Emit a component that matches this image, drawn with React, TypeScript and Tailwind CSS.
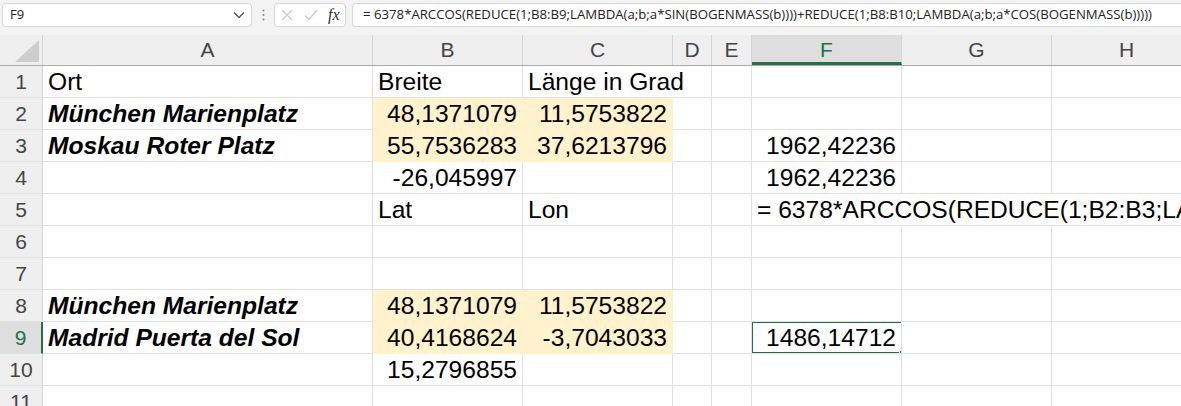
import React from "react";

type Col = { key: string; w: string };

const COLUMNS: Col[] = [
  { key: "A", w: "w-[330px]" },
  { key: "B", w: "w-[150px]" },
  { key: "C", w: "w-[150px]" },
  { key: "D", w: "w-[39px]" },
  { key: "E", w: "w-[40px]" },
  { key: "F", w: "w-[150px]" },
  { key: "G", w: "w-[150px]" },
  { key: "H", w: "w-[150px]" },
];

type CellData = {
  text?: string;
  right?: boolean;
  fill?: boolean;
  bi?: boolean;
  spill?: boolean;
  covered?: boolean;
  selected?: boolean;
};

const FORMULA =
  "= 6378*ARCCOS(REDUCE(1;B8:B9;LAMBDA(a;b;a*SIN(BOGENMASS(b))))+REDUCE(1;B8:B10;LAMBDA(a;b;a*COS(BOGENMASS(b)))))";

const ROWS: Record<string, CellData>[] = [
  {
    A: { text: "Ort" },
    B: { text: "Breite" },
    C: { text: "Länge in Grad", spill: true },
  },
  {
    A: { text: "München Marienplatz", bi: true },
    B: { text: "48,1371079", right: true, fill: true },
    C: { text: "11,5753822", right: true, fill: true },
  },
  {
    A: { text: "Moskau Roter Platz", bi: true },
    B: { text: "55,7536283", right: true, fill: true },
    C: { text: "37,6213796", right: true, fill: true },
    F: { text: "1962,42236", right: true },
  },
  {
    B: { text: "-26,045997", right: true },
    F: { text: "1962,42236", right: true },
  },
  {
    B: { text: "Lat" },
    C: { text: "Lon" },
    F: {
      text: "= 6378*ARCCOS(REDUCE(1;B2:B3;LAMBDA(a;b;a*SIN(BOGENMASS(b))))+REDUCE(1;B2:B4;LAMBDA(a;b;a*COS(BOGENMASS(b)))))",
      spill: true,
    },
    G: { covered: true },
    H: { covered: true },
  },
  {},
  {},
  {
    A: { text: "München Marienplatz", bi: true },
    B: { text: "48,1371079", right: true, fill: true },
    C: { text: "11,5753822", right: true, fill: true },
  },
  {
    A: { text: "Madrid Puerta del Sol", bi: true },
    B: { text: "40,4168624", right: true, fill: true },
    C: { text: "-3,7043033", right: true, fill: true },
    F: { text: "1486,14712", right: true, selected: true },
  },
  {
    B: { text: "15,2796855", right: true },
  },
  {},
];

function clsx(...parts: string[]) {
  return parts.filter(Boolean).join(" ");
}

function Cell({ col, data }: { col: Col; data?: CellData }) {
  const d = data || {};
  return (
    <div
      className={clsx(
        col.w,
        "relative h-[32px] shrink-0 border-b flex items-center px-[5px] whitespace-nowrap",
        d.fill ? "bg-[#fff2cc] border-[#fff2cc]" : "border-[#e1e1e1]",
        d.spill || d.covered ? "border-r border-r-transparent" : "border-r",
        d.right ? "justify-end" : "justify-start",
        d.spill ? "overflow-visible z-10" : "overflow-hidden",
        d.bi ? "font-bold italic" : ""
      )}
    >
      {d.text && <span className="pt-[1px]">{d.text}</span>}
      {d.selected && (
        <div className="absolute -left-[1px] -top-[1px] w-[152px] h-[33px] border-2 border-[#217346] z-20">
          <div className="absolute -right-[4px] -bottom-[4px] w-[6px] h-[6px] bg-[#217346] border border-white" />
        </div>
      )}
    </div>
  );
}

function TopBar() {
  return (
    <div className="h-[35px] bg-[#f3f3f3] flex items-start pt-[3px] font-['Open_Sans',sans-serif] text-[13px] text-[#222]">
      <div className="ml-[2px] w-[250px] h-[24px] bg-white border border-[#d6d6d6] rounded-[4px] flex items-center justify-between pl-[7px] pr-[6px]">
        <span>F9</span>
        <svg width="12" height="8" viewBox="0 0 12 8" fill="none">
          <path d="M1 1.5 L6 6.5 L11 1.5" stroke="#555" strokeWidth="1.3" />
        </svg>
      </div>
      <div className="w-[22px] h-[24px] flex items-center justify-center">
        <svg width="3" height="12" viewBox="0 0 3 12">
          <circle cx="1.5" cy="1.5" r="1" fill="#888" />
          <circle cx="1.5" cy="6" r="1" fill="#888" />
          <circle cx="1.5" cy="10.5" r="1" fill="#888" />
        </svg>
      </div>
      <div className="w-[72px] h-[24px] bg-white border border-[#d6d6d6] rounded-[4px] flex items-center pl-[6px] gap-[11px]">
        <svg width="12" height="12" viewBox="0 0 12 12" fill="none">
          <path d="M1 1 L11 11 M11 1 L1 11" stroke="#c8c8c8" strokeWidth="1.2" />
        </svg>
        <svg width="14" height="12" viewBox="0 0 14 12" fill="none">
          <path d="M1 6.5 L5 10.5 L13 1" stroke="#c8c8c8" strokeWidth="1.2" />
        </svg>
        <span className="font-['Liberation_Serif',serif] italic text-[16px] text-[#333] leading-none -ml-[1px]">
          fx
        </span>
      </div>
      <div className="ml-[6px] flex-1 h-[24px] bg-white border border-r-0 border-[#d6d6d6] rounded-l-[4px] flex items-center pl-[10px] whitespace-nowrap overflow-hidden text-[13.2px]">
        {FORMULA}
      </div>
    </div>
  );
}

function HeaderRow() {
  return (
    <div className="flex h-[31px] bg-[#efefef] border-b border-[#ababab] text-[21px] text-[#444]">
      <div className="w-[43px] shrink-0 h-full border-r border-[#d4d4d4] relative">
        <svg
          className="absolute right-[3px] bottom-[3px]"
          width="24"
          height="22"
          viewBox="0 0 24 22"
        >
          <polygon points="0,22 24,22 24,0" fill="#cdcdcd" />
        </svg>
      </div>
      {COLUMNS.map((c) => (
        <div
          key={c.key}
          className={clsx(
            c.w,
            "shrink-0 h-full flex items-center justify-center border-r border-[#d4d4d4]",
            c.key === "F"
              ? "bg-[#dedede] text-[#217346] border-b-[3px] border-b-[#217346] h-[31px] pt-[3px]"
              : ""
          )}
        >
          {c.key}
        </div>
      ))}
    </div>
  );
}

export default function App() {
  return (
    <div className="w-[1181px] h-[406px] overflow-hidden bg-white font-['Liberation_Sans',Arial,sans-serif] text-black">
      <TopBar />
      <HeaderRow />
      {ROWS.map((row, i) => {
        const sel = i === 8;
        return (
          <div key={i} className="flex text-[24.6px]">
            <div
              className={clsx(
                "w-[43px] shrink-0 h-[32px] flex items-center justify-center text-[21px] border-b border-[#e1e1e1]",
                sel
                  ? "bg-[#dedede] text-[#217346] border-r-2 border-r-[#217346]"
                  : "bg-[#efefef] text-[#444] border-r border-r-[#d4d4d4]"
              )}
            >
              {i + 1}
            </div>
            {COLUMNS.map((c) => (
              <Cell key={c.key} col={c} data={row[c.key]} />
            ))}
          </div>
        );
      })}
    </div>
  );
}
